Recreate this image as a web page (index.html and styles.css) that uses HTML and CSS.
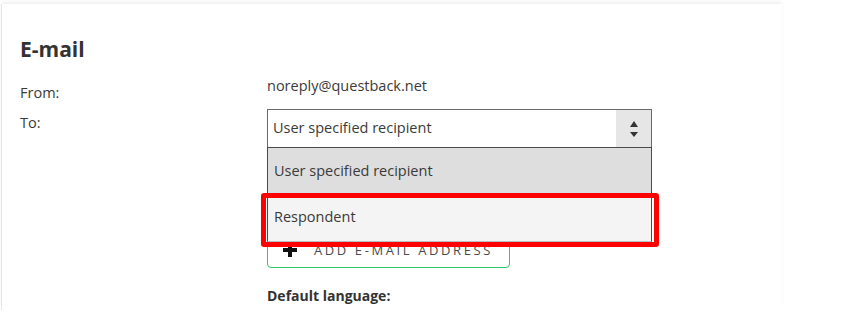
FILE: index.html
```html
<!DOCTYPE html>
<html lang="en">

<head>
  <meta charset="UTF-8">
  <meta name="viewport" content="width=device-width, initial-scale=1.0">
  <title>E-mail</title>
  <link rel="stylesheet" href="styles.css">
</head>

<body>
  <div class="card">
    <h2 class="title">E-mail</h2>

    <div class="row row-from">
      <span class="label">From:</span>
      <span class="value">noreply@questback.net</span>
    </div>

    <div class="row row-to">
      <span class="label">To:</span>
      <div class="select-wrap">
        <div class="select">
          <span class="select-text">User specified recipient</span>
          <span class="select-arrows">
            <span class="tri tri-up"></span>
            <span class="tri tri-down"></span>
          </span>
        </div>
        <ul class="options">
          <li class="option selected">User specified recipient</li>
          <li class="option hover">Respondent</li>
        </ul>
        <div class="highlight"></div>
      </div>
    </div>

    <div class="row row-add">
      <span class="label"></span>
      <div class="add-btn">
        <svg class="plus" width="14" height="14" viewBox="0 0 14 14">
          <path d="M5 0h4v5h5v4H9v5H5V9H0V5h5z" fill="#111" />
        </svg>
        <span>ADD E-MAIL ADDRESS</span>
      </div>
    </div>

    <div class="row row-lang">
      <span class="label"></span>
      <span class="value strong">Default language:</span>
    </div>
  </div>
</body>

</html>
```

FILE: styles.css
```css
body {
  margin: 0;
  background: #fff;
  font-family: "Open Sans", "Noto Sans", Arial, sans-serif;
  font-size: 14.5px;
  line-height: 18px;
  color: #3a3a3a;
}

.card {
  margin: 4px 0 0 1px;
  width: 781px;
  height: 306px;
  padding: 32px 0 0 18px;
  box-sizing: border-box;
  background: #fff;
  border-left: 1px solid #e4e4e4;
  box-shadow: 0 -3px 4px -1px rgba(0, 0, 0, 0.07);
}

.title {
  margin: 0 0 15px;
  font-size: 21px;
  line-height: 26px;
  font-weight: 700;
  color: #333;
}

.row {
  display: flex;
}

.label {
  width: 247px;
  flex: none;
}

.row-from .label {
  padding-top: 7px;
}

.row-to {
  margin-top: 7px;
}

.row-to .label {
  padding-top: 5px;
}

.select-wrap {
  position: relative;
  width: 385px;
}

.select {
  display: flex;
  height: 39px;
  border: 1px solid #6a6a6a;
  box-sizing: border-box;
  background: #fff;
}

.select-text {
  flex: 1;
  padding: 9px 0 0 5px;
}

.select-arrows {
  width: 35px;
  background: #e6e6e6;
  display: flex;
  flex-direction: column;
  align-items: center;
  justify-content: center;
  gap: 5px;
}

.tri {
  width: 0;
  height: 0;
  border-left: 4px solid transparent;
  border-right: 4px solid transparent;
}

.tri-up {
  border-bottom: 6px solid #333;
}

.tri-down {
  border-top: 5px solid #333;
}

.options {
  position: absolute;
  top: 38px;
  left: 0;
  width: 385px;
  margin: 0;
  padding: 0;
  list-style: none;
  box-sizing: border-box;
  border: 1px solid #4a4a4a;
  border-bottom-color: #b8bfc4;
  z-index: 2;
}

.option {
  height: 46px;
  padding: 14px 0 0 6px;
  box-sizing: border-box;
}

.option.selected {
  background: #dedede;
}

.option.hover {
  background: #f4f4f4;
  height: 47px;
}

.highlight {
  position: absolute;
  top: 84px;
  left: -6px;
  width: 398px;
  height: 54px;
  box-sizing: border-box;
  border: 5px solid #ff0000;
  border-radius: 3px;
  z-index: 3;
}

.row-add {
  margin-top: 84px;
}

.add-btn {
  display: flex;
  align-items: center;
  width: 243px;
  height: 36px;
  padding: 0 0 0 15px;
  box-sizing: border-box;
  border: 1px solid #33c66c;
  border-radius: 4px;
  background: #fff;
  font-size: 13px;
  letter-spacing: 2.6px;
  color: #4a4a4a;
  cursor: pointer;
}

.plus {
  margin-right: 17px;
}

.row-lang {
  margin-top: 19px;
}

.strong {
  font-size: 14px;
  font-weight: 700;
  color: #333;
}
```
